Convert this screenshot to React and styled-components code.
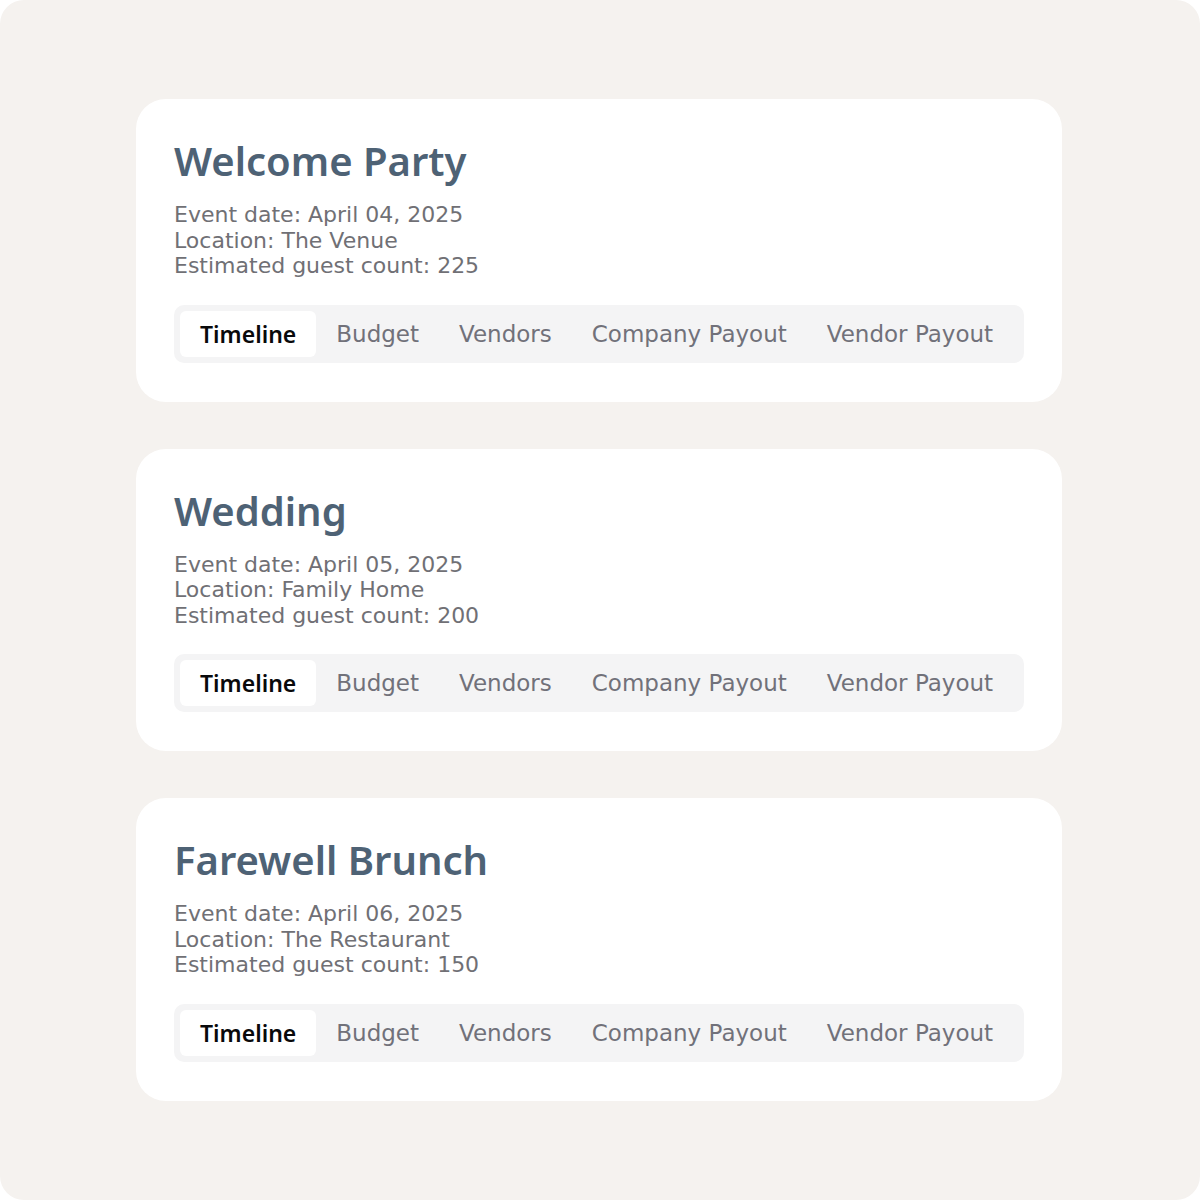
import React from 'react';
import styled, { createGlobalStyle } from 'styled-components';

const GlobalStyle = createGlobalStyle`
  html, body {
    margin: 0;
    padding: 0;
    background: #ffffff;
  }
  body {
    font-family: "DejaVu Sans", "Noto Sans", sans-serif;
  }
`;

const Page = styled.div`
  width: 1200px;
  height: 1200px;
  box-sizing: border-box;
  background: #f5f2ef;
  border-radius: 24px;
  padding: 99px 2px 0 0;
  display: flex;
  flex-direction: column;
  align-items: center;
  gap: 47px;
`;

const Card = styled.section`
  width: 926px;
  box-sizing: border-box;
  background: #ffffff;
  border-radius: 30px;
  padding: 38px 38px 39px 38px;
`;

const Title = styled.h2`
  margin: 0;
  font-family: "Noto Sans", "DejaVu Sans", sans-serif;
  font-size: 40px;
  line-height: 48px;
  font-weight: 600;
  color: #4e6275;
`;

const Details = styled.div`
  margin-top: 17px;
  font-size: 22px;
  line-height: 25.5px;
  color: #707075;
`;

const TabBar = styled.div`
  margin-top: 26px;
  display: flex;
  padding: 6px;
  background: #f4f4f5;
  border-radius: 10px;
`;

const Tab = styled.button`
  border: none;
  font-family: ${(p) => (p.active ? '"Noto Sans", "DejaVu Sans", sans-serif' : 'inherit')};
  font-size: 23px;
  line-height: 46px;
  padding: 0 20px;
  border-radius: 6px;
  cursor: pointer;
  background: ${(p) => (p.active ? '#ffffff' : 'transparent')};
  color: ${(p) => (p.active ? '#09090b' : '#71717a')};
  font-weight: ${(p) => (p.active ? 600 : 400)};
`;

const events = [
  { name: 'Welcome Party', date: 'April 04, 2025', location: 'The Venue', guests: 225 },
  { name: 'Wedding', date: 'April 05, 2025', location: 'Family Home', guests: 200 },
  { name: 'Farewell Brunch', date: 'April 06, 2025', location: 'The Restaurant', guests: 150 },
];

const tabs = ['Timeline', 'Budget', 'Vendors', 'Company Payout', 'Vendor Payout'];

export default function App() {
  return (
    <>
      <GlobalStyle />
      <Page>
        {events.map((ev) => (
          <Card key={ev.name}>
            <Title>{ev.name}</Title>
            <Details>
              <div>{`Event date: ${ev.date}`}</div>
              <div>{`Location: ${ev.location}`}</div>
              <div>{`Estimated guest count: ${ev.guests}`}</div>
            </Details>
            <TabBar>
              {tabs.map((t, i) => (
                <Tab key={t} type="button" active={i === 0}>{t}</Tab>
              ))}
            </TabBar>
          </Card>
        ))}
      </Page>
    </>
  );
}
